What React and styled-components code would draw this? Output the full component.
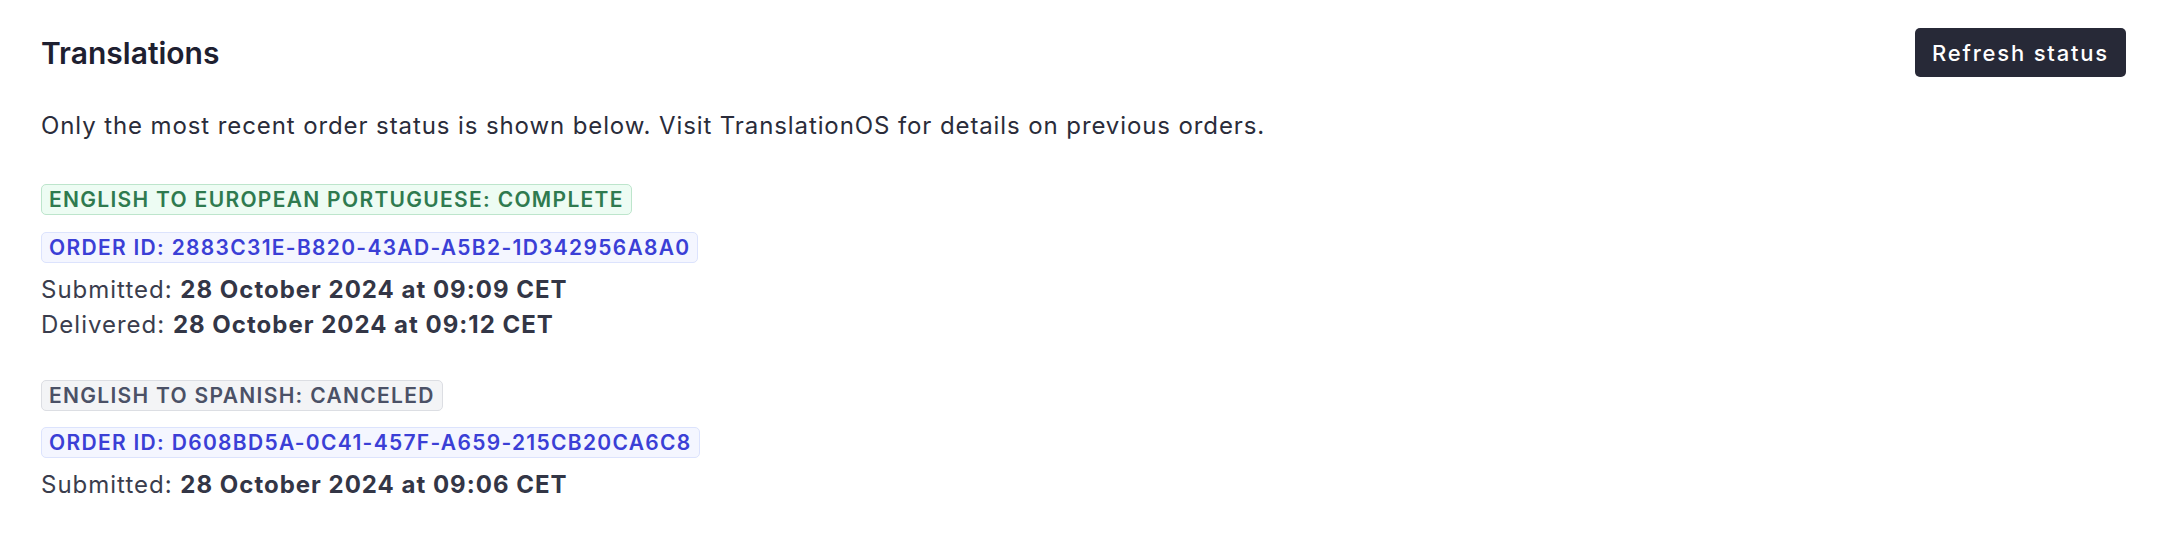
import styled, { createGlobalStyle } from "styled-components";

const GlobalStyle = createGlobalStyle`
  body {
    margin: 0;
    background: #ffffff;
    font-family: Inter, "Noto Sans", sans-serif;
    -webkit-font-smoothing: antialiased;
  }
`;

const Page = styled.div`
  padding: 28px 36px 0 41px;
`;

const Header = styled.div`
  display: flex;
  align-items: center;
  justify-content: space-between;
  height: 49px;
`;

const Title = styled.h2`
  margin: 0;
  font-size: 30px;
  font-weight: 600;
  color: #1e2030;
`;

const Button = styled.button`
  height: 49px;
  padding: 0 17px;
  border: none;
  border-radius: 5px;
  background-color: #272937;
  color: #ffffff;
  font-family: inherit;
  font-size: 22px;
  font-weight: 500;
  letter-spacing: 1.8px;
  cursor: pointer;
`;

const Intro = styled.p`
  margin: 31px 0 41px;
  font-size: 24px;
  line-height: 35px;
  letter-spacing: 0.9px;
  color: #2a2c3a;
`;

const Order = styled.section`
  display: flex;
  flex-direction: column;
  align-items: flex-start;
  & + & {
    margin-top: 38px;
  }
`;

const tones = {
  green: { bg: "#edfcf3", border: "#bde5cc", fg: "#2f7a4f" },
  blue: { bg: "#f4f6ff", border: "#dce3fd", fg: "#3b3fd6" },
  gray: { bg: "#f3f4f6", border: "#dcdee3", fg: "#4b5166" },
};

const Badge = styled.span`
  display: inline-flex;
  align-items: center;
  box-sizing: border-box;
  height: 31px;
  padding: 0 7px;
  border: 1.5px solid ${(p) => tones[p.$tone].border};
  border-radius: 5px;
  background-color: ${(p) => tones[p.$tone].bg};
  color: ${(p) => tones[p.$tone].fg};
  font-size: 21px;
  font-weight: 600;
  letter-spacing: 1.3px;
  text-transform: uppercase;
  white-space: nowrap;
  & + & {
    margin-top: 16.5px;
  }
`;

const Dates = styled.div`
  margin-top: 9px;
  font-size: 24px;
  line-height: 35px;
  letter-spacing: 1px;
  color: #3a3d4d;
  strong {
    font-weight: 700;
    color: #333646;
  }
`;

const orders = [
  {
    title: "English to European Portuguese: Complete",
    tone: "green",
    id: "2883C31E-B820-43AD-A5B2-1D342956A8A0",
    submitted: "28 October 2024 at 09:09 CET",
    delivered: "28 October 2024 at 09:12 CET",
  },
  {
    title: "English to Spanish: Canceled",
    tone: "gray",
    id: "D608BD5A-0C41-457F-A659-215CB20CA6C8",
    submitted: "28 October 2024 at 09:06 CET",
  },
];

const App = () => {
  return (
    <>
      <GlobalStyle />
      <Page>
        <Header>
          <Title>Translations</Title>
          <Button>Refresh status</Button>
        </Header>
        <Intro>
          Only the most recent order status is shown below. Visit TranslationOS
          for details on previous orders.
        </Intro>
        {orders.map((o) => (
          <Order key={o.id}>
            <Badge $tone={o.tone}>{o.title}</Badge>
            <Badge $tone="blue">Order ID: {o.id}</Badge>
            <Dates>
              <div>
                Submitted: <strong>{o.submitted}</strong>
              </div>
              {o.delivered && (
                <div>
                  Delivered: <strong>{o.delivered}</strong>
                </div>
              )}
            </Dates>
          </Order>
        ))}
      </Page>
    </>
  );
};

export default App;
